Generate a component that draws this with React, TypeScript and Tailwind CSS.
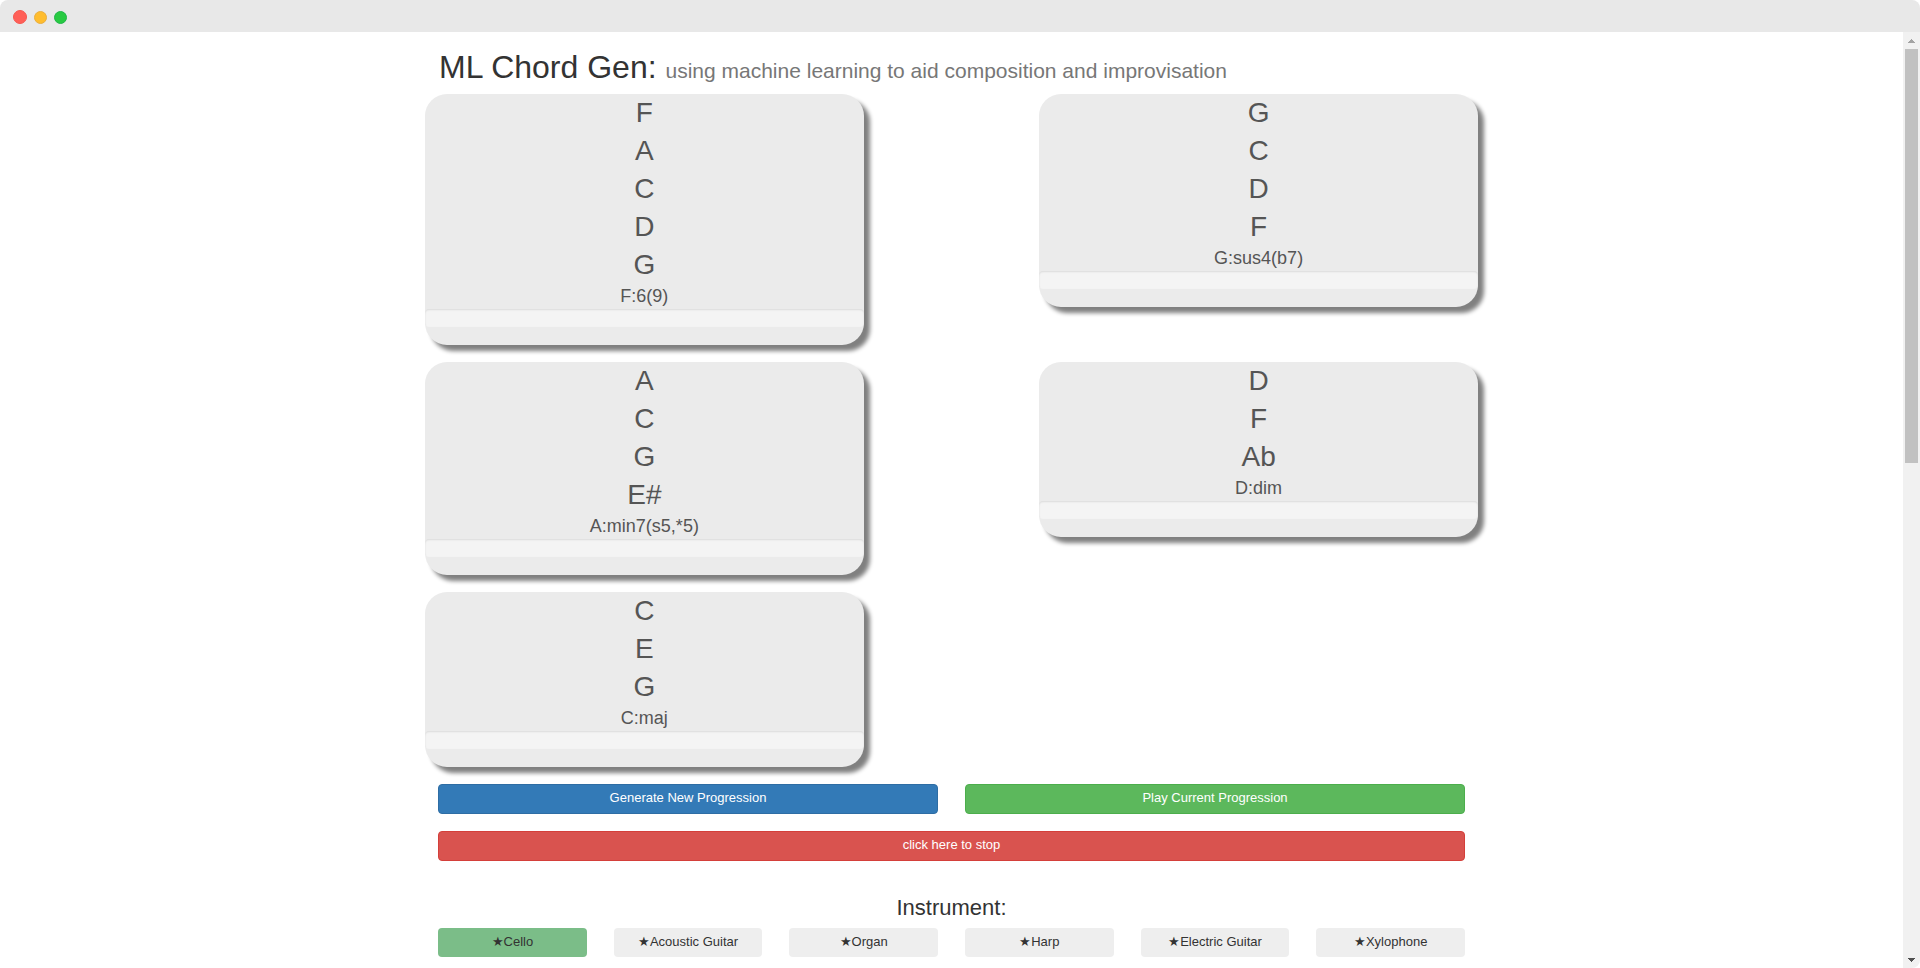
import React from "react";

type Chord = { name: string; notes: string[] };

const chords: Chord[] = [
  { name: "F:6(9)", notes: ["F", "A", "C", "D", "G"] },
  { name: "G:sus4(b7)", notes: ["G", "C", "D", "F"] },
  { name: "A:min7(s5,*5)", notes: ["A", "C", "G", "E#"] },
  { name: "D:dim", notes: ["D", "F", "Ab"] },
  { name: "C:maj", notes: ["C", "E", "G"] },
];

const instruments = ["Cello", "Acoustic Guitar", "Organ", "Harp", "Electric Guitar", "Xylophone"];

function TitleBar() {
  return (
    <div className="flex h-8 shrink-0 items-center gap-[7px] bg-[#e8e8e8] pt-0.5 pl-[13px]">
      <span className="size-[14px] rounded-full border border-[#f5574f] bg-[#ff5f57]" />
      <span className="size-[13px] rounded-full border border-[#e8ae3f] bg-[#ffbd2e]" />
      <span className="size-[13px] rounded-full border border-[#20b549] bg-[#28ca42]" />
    </div>
  );
}

function ScrollBar() {
  return (
    <div className="flex w-[17px] shrink-0 flex-col items-center bg-[#f1f1f1]" aria-hidden="true">
      <svg className="h-[17px] w-[17px] shrink-0" viewBox="0 0 17 17" shapeRendering="crispEdges" fill="#a3a3a3">
        <path d="M8 7h1v1h1v1h1v1h1v1H5v-1h1V9h1V8h1z" />
      </svg>
      <div className="h-[414px] w-[13px] bg-[#c1c1c1]" />
      <svg className="mt-auto h-[17px] w-[17px] shrink-0" viewBox="0 0 17 17" shapeRendering="crispEdges" fill="#505050">
        <path d="M5 7h7v1h-1v1h-1v1H9v1H8v-1H7V9H6V8H5z" />
      </svg>
    </div>
  );
}

function ChordCard({ chord }: { chord: Chord }) {
  return (
    <section className="w-5/12 rounded-[22px] bg-[#ebebeb] pb-[18px] text-center text-[#555] shadow-[6px_6px_4px_#808080]">
      {chord.notes.map((note) => (
        <p key={note} className="text-[28px] leading-[38px]">
          {note}
        </p>
      ))}
      <p className="text-[18px] leading-[25px]">{chord.name}</p>
      <div className="h-[18px] rounded-[4px] bg-[#f4f4f4] shadow-[inset_0_1px_2px_rgba(0,0,0,0.1)]" />
    </section>
  );
}

const actionClass = "h-[30px] w-full rounded-[4px] border pb-[3px] text-[13px] leading-[18px] text-white";

export default function App() {
  return (
    <div className="flex h-screen flex-col overflow-hidden rounded-[8px] bg-white font-['Liberation_Sans',Arial,sans-serif] text-[#333]">
      <TitleBar />
      <div className="flex min-h-0 flex-1">
        <main className="min-w-0 flex-1 overflow-hidden">
          <div className="mx-auto max-w-[1053px]">
            <h1 className="px-[14px] pt-[17px] pb-[9px] text-[32px] leading-[36px]">
              ML Chord Gen: <small className="text-[21px] leading-none text-[#777]">using machine learning to aid composition and improvisation</small>
            </h1>
            <div className="flex flex-wrap items-start justify-between gap-y-[17px]">
              {chords.map((chord) => (
                <ChordCard key={chord.name} chord={chord} />
              ))}
            </div>
            <div className="grid grid-cols-2 gap-x-[27px] gap-y-[17px] px-[13px] pt-[17px]">
              <button className={`${actionClass} border-[#2e6da4] bg-[#337ab7]`}>Generate New Progression</button>
              <button className={`${actionClass} border-[#4cae4c] bg-[#5cb85c]`}>Play Current Progression</button>
              <button className={`${actionClass} col-span-2 border-[#d43f3a] bg-[#d9534f]`}>click here to stop</button>
            </div>
            <h2 className="pt-[34px] pb-[8px] text-center text-[22px] leading-[25px]">Instrument:</h2>
            <div className="grid grid-cols-6 gap-x-[27px] px-[13px]">
              {instruments.map((name, i) => (
                <button
                  key={name}
                  className={`h-[29px] rounded-[4px] pb-px text-[13px] leading-[18px] ${i === 0 ? "bg-[#7bbd88]" : "bg-[#eee]"}`}
                >
                  ★{name}
                </button>
              ))}
            </div>
          </div>
        </main>
        <ScrollBar />
      </div>
    </div>
  );
}
